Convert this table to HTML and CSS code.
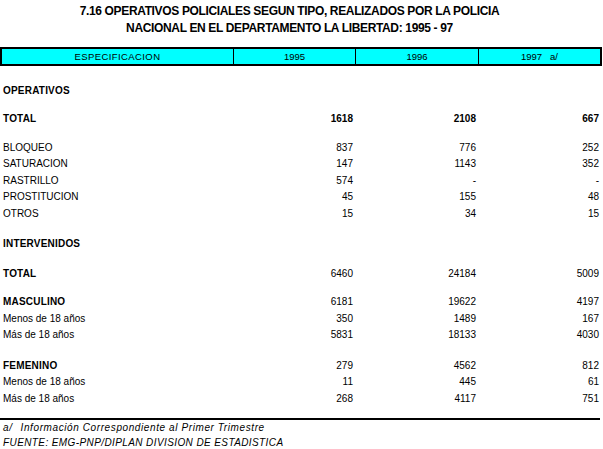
FILE: index.html
```html
<!DOCTYPE html>
<html lang="es">
<head>
<meta charset="utf-8">
<title>7.16 Operativos policiales</title>
<link rel="stylesheet" href="styles.css">
</head>
<body>
<div class="page">
  <h1 class="title">7.16 OPERATIVOS POLICIALES SEGUN TIPO, REALIZADOS POR LA POLICIA<br>NACIONAL EN EL DEPARTAMENTO LA LIBERTAD: 1995 - 97</h1>

  <div class="head">
    <div class="hc wide">ESPECIFICACION</div>
    <div class="hc">1995</div>
    <div class="hc">1996</div>
    <div class="hc">1997 &nbsp; a/</div>
  </div>

  <div class="body">
    <div class="row b"><span>OPERATIVOS</span><span></span><span></span><span></span></div>
    <div class="gap g12"></div>
    <div class="row b"><span>TOTAL</span><span>1618</span><span>2108</span><span>667</span></div>
    <div class="gap g12"></div>
    <div class="row"><span>BLOQUEO</span><span>837</span><span>776</span><span>252</span></div>
    <div class="row"><span>SATURACION</span><span>147</span><span>1143</span><span>352</span></div>
    <div class="row"><span>RASTRILLO</span><span>574</span><span>-</span><span>-</span></div>
    <div class="row"><span>PROSTITUCION</span><span>45</span><span>155</span><span>48</span></div>
    <div class="row"><span>OTROS</span><span>15</span><span>34</span><span>15</span></div>
    <div class="gap g14"></div>
    <div class="row b"><span>INTERVENIDOS</span><span></span><span></span><span></span></div>
    <div class="gap g13"></div>
    <div class="row bl"><span>TOTAL</span><span>6460</span><span>24184</span><span>5009</span></div>
    <div class="gap g12"></div>
    <div class="row bl"><span>MASCULINO</span><span>6181</span><span>19622</span><span>4197</span></div>
    <div class="row"><span>Menos de 18 años</span><span>350</span><span>1489</span><span>167</span></div>
    <div class="row"><span>Más de 18 años</span><span>5831</span><span>18133</span><span>4030</span></div>
    <div class="gap g14"></div>
    <div class="row bl"><span>FEMENINO</span><span>279</span><span>4562</span><span>812</span></div>
    <div class="row"><span>Menos de 18 años</span><span>11</span><span>445</span><span>61</span></div>
    <div class="row"><span>Más de 18 años</span><span>268</span><span>4117</span><span>751</span></div>
  </div>

  <div class="foot">
    <p class="note"><span class="mark">a/</span>Información Correspondiente al Primer Trimestre</p>
    <p class="src">FUENTE: EMG-PNP/DIPLAN DIVISION DE ESTADISTICA</p>
  </div>
</div>
</body>
</html>
```

FILE: styles.css
```css
html, body {
  margin: 0;
  padding: 0;
  background: #ffffff;
}

body {
  font-family: "Liberation Sans", Arial, sans-serif;
  color: #000000;
}

.page {
  width: 603px;
}

.title {
  margin: 0;
  padding: 3px 24px 0 0;
  font-size: 12px;
  line-height: 17px;
  font-weight: bold;
  text-align: center;
  letter-spacing: -0.35px;
}

.head {
  margin-top: 10px;
  width: 602px;
  height: 19px;
  box-sizing: border-box;
  border: 2px solid #000000;
  background: #00ffff;
  display: grid;
  grid-template-columns: 231px 122px 123px 1fr;
}

.hc {
  font-size: 9.5px;
  line-height: 15px;
  text-align: center;
  border-left: 1px solid #000000;
}

.hc.wide {
  letter-spacing: 0.4px;
}

.hc:first-child {
  border-left: none;
}

.body {
  margin-top: 16.5px;
}

.row {
  display: grid;
  grid-template-columns: 233px 120px 123px 123px;
  height: 16.5px;
  line-height: 16.5px;
  font-size: 10px;
}

.row span {
  text-align: right;
  white-space: nowrap;
}

.row span:first-child {
  text-align: left;
  padding-left: 3px;
}

.row.b span {
  font-weight: bold;
  letter-spacing: 0.2px;
}

.row.b span:not(:first-child) {
  letter-spacing: 0;
}

.row.bl span:first-child {
  font-weight: bold;
  letter-spacing: 0.2px;
}

.gap.g12 { height: 12px; }
.gap.g13 { height: 13px; }
.gap.g14 { height: 14px; }

.foot {
  margin-top: 10.5px;
  width: 600px;
  border-top: 2px solid #000000;
}

.foot p {
  margin: 0;
  padding-left: 3px;
  font-size: 10px;
  line-height: 15px;
  font-style: italic;
}

.note {
  letter-spacing: 0.6px;
}

.mark {
  margin-right: 8px;
}

.src {
  letter-spacing: 0.4px;
}
```
